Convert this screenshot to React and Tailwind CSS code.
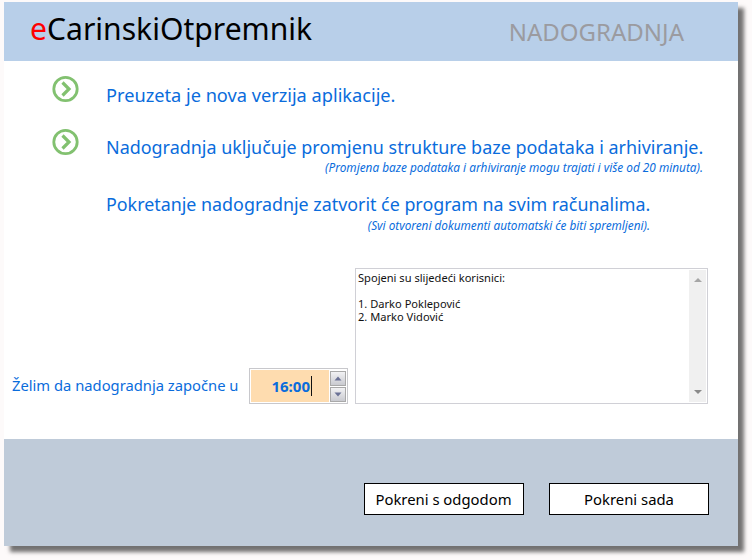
const font = { fontFamily: '"Noto Sans", "Open Sans", sans-serif' };

function Chevron({ className = "" }) {
  return (
    <svg width="28" height="28" viewBox="0 0 28 28" className={`shrink-0 ${className}`}>
      <circle cx="13.5" cy="14" r="11.7" fill="none" stroke="#82c170" strokeWidth="2.8" />
      <path d="M10.5 7.5 L17 14 L10.5 20.5" fill="none" stroke="#82c170" strokeWidth="3.2" />
    </svg>
  );
}

function SpinButton({ up }) {
  return (
    <div className="w-[16px] h-[15px] border border-[#a9a9a9] bg-[linear-gradient(#f2f2f4,#c9cad0)] flex items-center justify-center">
      <svg width="8" height="5" viewBox="0 0 8 5">
        <path d={up ? "M4 0.5 L7.5 4.5 L0.5 4.5 Z" : "M0.5 0.5 L7.5 0.5 L4 4.5 Z"} fill="#6a7196" />
      </svg>
    </div>
  );
}

export default function App() {
  return (
    <div className="w-[752px] h-[560px] bg-[#fdfafa] pt-[2px] pl-[4px] overflow-hidden" style={font}>
      <div className="w-[734px] h-[544px] bg-white flex flex-col shadow-[6px_6px_4px_rgba(0,0,0,0.55)]">
        <header className="h-[59px] shrink-0 bg-[#b8cfe9] flex items-center justify-between pl-[26px] pr-[54px]">
          <div className="text-[30.1px] leading-none text-black pb-[4px]">
            <span className="text-[#ff0000]">e</span>CarinskiOtpremnik
          </div>
          <div className="text-[24px] leading-none text-[#9b9ba0]">NADOGRADNJA</div>
        </header>

        <main className="flex-1 flex flex-col">
          <div className="flex pl-[48px] pt-[14px] h-[63px]">
            <Chevron />
            <p className="ml-[26px] mt-[8px] text-[18.2px] leading-[24px] text-[#0a6cdc]">Preuzeta je nova verzija aplikacije.</p>
          </div>
          <div className="flex pl-[48px] h-[59px]">
            <Chevron className="mt-[4px]" />
            <div className="ml-[26px] w-[597px] mt-[11px]">
              <p className="text-[17.94px] leading-[24px] text-[#0a6cdc] whitespace-nowrap">Nadogradnja uključuje promjenu strukture baze podataka i arhiviranje.</p>
              <p className="text-[11.8px] leading-[14px] mt-[1px] italic text-[#0a6cdc] text-right whitespace-nowrap">(Promjena baze podataka i arhiviranje mogu trajati i više od 20 minuta).</p>
            </div>
          </div>
          <div className="pl-[102px] pt-[9px] w-[646px]">
            <p className="text-[17.88px] leading-[24px] text-[#0a6cdc] whitespace-nowrap">Pokretanje nadogradnje zatvorit će program na svim računalima.</p>
            <p className="text-[11.75px] leading-[14px] mt-[2px] italic text-[#0a6cdc] text-right whitespace-nowrap">(Svi otvoreni dokumenti automatski će biti spremljeni).</p>
          </div>

          <div className="flex items-end pl-[8px] mt-[36px]">
            <label className="text-[14.75px] leading-[20px] text-[#0a6cdc] whitespace-nowrap w-[237px] pb-[9px]">Želim da nadogradnja započne u</label>
            <div className="w-[99px] h-[36px] border border-[#c8c8cc] flex items-center p-[1px]">
              <div className="w-[81px] h-[32px] bg-[#fedcaf] flex items-center justify-end pr-[17px]">
                <span className="text-[15px] font-bold text-[#0a6cdc] leading-none">16:00</span>
                <span className="w-[1px] h-[20px] bg-[#111] ml-[1px]" />
              </div>
              <div className="ml-[1px] flex flex-col gap-[1px]">
                <SpinButton up />
                <SpinButton />
              </div>
            </div>
            <div className="ml-[7px] w-[353px] h-[136px] border border-[#d0d0d6] flex p-[1px]">
              <div className="flex-1 text-[11.1px] leading-[13px] text-[#111] pl-[1px] pt-[1px] whitespace-pre-line">
                {"Spojeni su slijedeći korisnici:\n\n1. Darko Poklepović\n2. Marko Vidović"}
              </div>
              <div className="w-[17px] bg-[#f0f0f0] flex flex-col items-center justify-between py-[8px]">
                <svg width="8" height="4" viewBox="0 0 8 4"><path d="M4 0 L8 4 L0 4 Z" fill="#a6a6a6" /></svg>
                <svg width="8" height="4" viewBox="0 0 8 4"><path d="M0 0 L8 0 L4 4 Z" fill="#8a8a8a" /></svg>
              </div>
            </div>
          </div>
        </main>

        <footer className="h-[107px] shrink-0 bg-[#bfcbd9] flex justify-end gap-[25px] pt-[44px] pr-[29px]">
          <button className="w-[160px] h-[32px] bg-white border border-black text-[14.85px] text-black pr-[1px]">Pokreni s odgodom</button>
          <button className="w-[160px] h-[32px] bg-white border border-black text-[14.85px] text-black">Pokreni sada</button>
        </footer>
      </div>
    </div>
  );
}
